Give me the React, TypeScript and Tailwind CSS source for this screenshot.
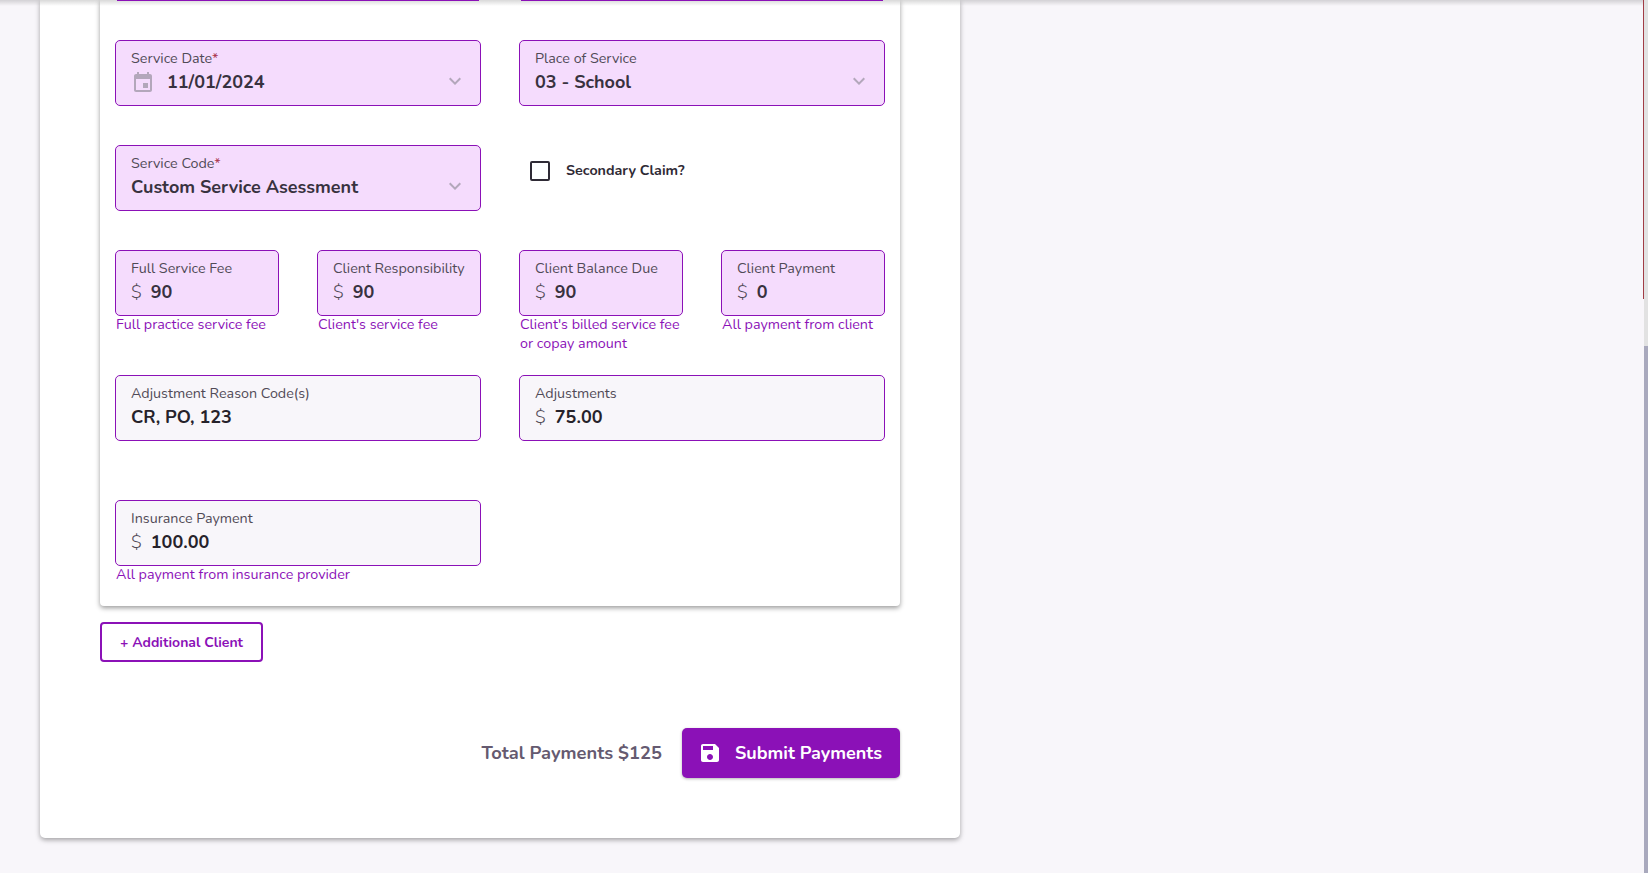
import React from "react";

const font = "font-['Nunito','Noto_Sans','Open_Sans',sans-serif]";

const CalendarGlyph = () => (
  <svg viewBox="0 0 24 24" className="w-6 h-6 shrink-0 fill-[#b3a7bb]">
    <path d="M17 12h-5v5h5v-5zM16 1v2H8V1H6v2H5c-1.11 0-1.99.9-1.99 2L3 19c0 1.1.89 2 2 2h14c1.1 0 2-.9 2-2V5c0-1.1-.9-2-2-2h-1V1h-2zm3 18H5V8h14v11z" />
  </svg>
);

const SaveGlyph = () => (
  <svg viewBox="0 0 24 24" className="w-6 h-6 shrink-0 fill-white">
    <path d="M17 3H5c-1.11 0-2 .9-2 2v14c0 1.1.89 2 2 2h14c1.1 0 2-.9 2-2V7l-4-4zm-5 16c-1.66 0-3-1.34-3-3s1.34-3 3-3 3 1.34 3 3-1.34 3-3 3zm3-10H5V5h10v4z" />
  </svg>
);

const ExpandGlyph = () => (
  <svg viewBox="0 0 24 24" className="absolute right-[13px] top-[28px] w-6 h-6 fill-[#b3a7bb]">
    <path d="M16.59 8.59 12 13.17 7.41 8.59 6 10l6 6 6-6z" />
  </svg>
);

type FieldProps = {
  label: string;
  value: string;
  required?: boolean;
  filled?: boolean;
  prefix?: boolean;
  select?: boolean;
  calendar?: boolean;
  helper?: string;
};

const Field = ({ label, value, required, filled = true, prefix, select, calendar, helper }: FieldProps) => (
  <div className="min-w-0">
    <div
      className={
        "relative h-[66px] rounded-[5px] border border-[#8b11b7] pl-[15px] pr-3 pt-[8px] " +
        (filled ? "bg-[#f5dcfd]" : "bg-[#f8f6fa]")
      }
    >
      <div className="text-[14.3px] leading-5 text-[#504a56] whitespace-nowrap">
        {label}
        {required && <span className="text-[#a8324a]">*</span>}
      </div>
      <div className="flex items-center h-[27px]">
        {calendar && <span className="mr-3"><CalendarGlyph /></span>}
        {prefix && <span className="text-[18px] font-light text-[#504a56] mr-[9px]">$</span>}
        <span className={"text-[18px] font-bold whitespace-nowrap " + (filled ? "text-[#38323f]" : "text-[#26222a]")}>
          {value}
        </span>
      </div>
      {select && <ExpandGlyph />}
    </div>
    {helper && <p className="-mt-[1px] pl-[1px] text-[14.3px] leading-[19px] text-[#8b11b7]">{helper}</p>}
  </div>
);

export default function App() {
  return (
    <div className={"h-[873px] w-[1648px] overflow-hidden flex bg-[#f8f6fa] " + font}>
      <div className="relative flex-1 min-w-0">
        {/* shadow of the sticky header that sits just above the fold */}
        <div className="absolute inset-x-0 top-0 h-[6px] bg-gradient-to-b from-black/15 to-transparent" />
        <div className="absolute right-0 top-0 h-[299px] w-px bg-[#a13c45]" />

        <div className="ml-[40px] w-[920px] h-[838px] bg-white rounded-b-[5px] shadow-[0_2px_5px_rgba(0,0,0,0.35)] px-[60px]">
          <div className="h-[606px] bg-white rounded-b-[4px] shadow-[0_2px_5px_rgba(0,0,0,0.4)] px-[15px]">
            <div className="grid grid-cols-2 gap-x-[38px]">
              <div className="relative z-10 mx-[2px] h-px bg-[#8b11b7]" />
              <div className="relative z-10 mx-[2px] h-px bg-[#8b11b7]" />
            </div>

            <div className="grid grid-cols-2 gap-x-[38px] pt-[39px]">
              <Field label="Service Date" required value="11/01/2024" select calendar />
              <Field label="Place of Service" value="03 - School" select />
            </div>

            <div className="grid grid-cols-2 gap-x-[38px] pt-[39px]">
              <Field label="Service Code" required value="Custom Service Asessment" select />
              <label className="flex items-center h-[52px] pl-[11px] gap-[16px]">
                <span className="w-5 h-5 rounded-[2px] border-2 border-[#2f2a35] bg-white" />
                <span className="text-[14.3px] font-bold text-[#2f2a35]">Secondary Claim?</span>
              </label>
            </div>

            <div className="grid grid-cols-4 gap-x-[38px] pt-[39px] h-[164px]">
              <Field label="Full Service Fee" value="90" prefix helper="Full practice service fee" />
              <Field label="Client Responsibility" value="90" prefix helper="Client's service fee" />
              <Field label="Client Balance Due" value="90" prefix helper="Client's billed service fee or copay amount" />
              <Field label="Client Payment" value="0" prefix helper="All payment from client" />
            </div>

            <div className="grid grid-cols-2 gap-x-[38px] h-[125px]">
              <Field label="Adjustment Reason Code(s)" value="CR, PO, 123" filled={false} />
              <Field label="Adjustments" value="75.00" prefix filled={false} />
            </div>

            <div className="grid grid-cols-2 gap-x-[38px]">
              <Field label="Insurance Payment" value="100.00" prefix filled={false} helper="All payment from insurance provider" />
            </div>
          </div>

          <button className="mt-4 h-10 w-[163px] rounded-[4px] border-2 border-[#8b11b7] bg-white text-[14px] font-bold text-[#8b11b7]">
            + Additional Client
          </button>

          <div className="mt-[66px] flex items-center justify-end gap-5">
            <span className="pt-[2px] text-[18.3px] font-bold text-[#655a70]">Total Payments $125</span>
            <button className="flex items-center h-[50px] w-[218px] pl-4 gap-[13px] rounded-[5px] bg-[#8b11b7] text-[18px] font-bold text-white shadow-[0_1px_3px_rgba(0,0,0,0.3)]">
              <SaveGlyph />
              Submit Payments
            </button>
          </div>
        </div>
      </div>

      {/* scrollbar */}
      <div className="w-[4px] h-full flex flex-col bg-[#e2e2e2]">
        <div className="h-[346px]" />
        <div className="flex-1 bg-[#a9a9bd]" />
      </div>
    </div>
  );
}
